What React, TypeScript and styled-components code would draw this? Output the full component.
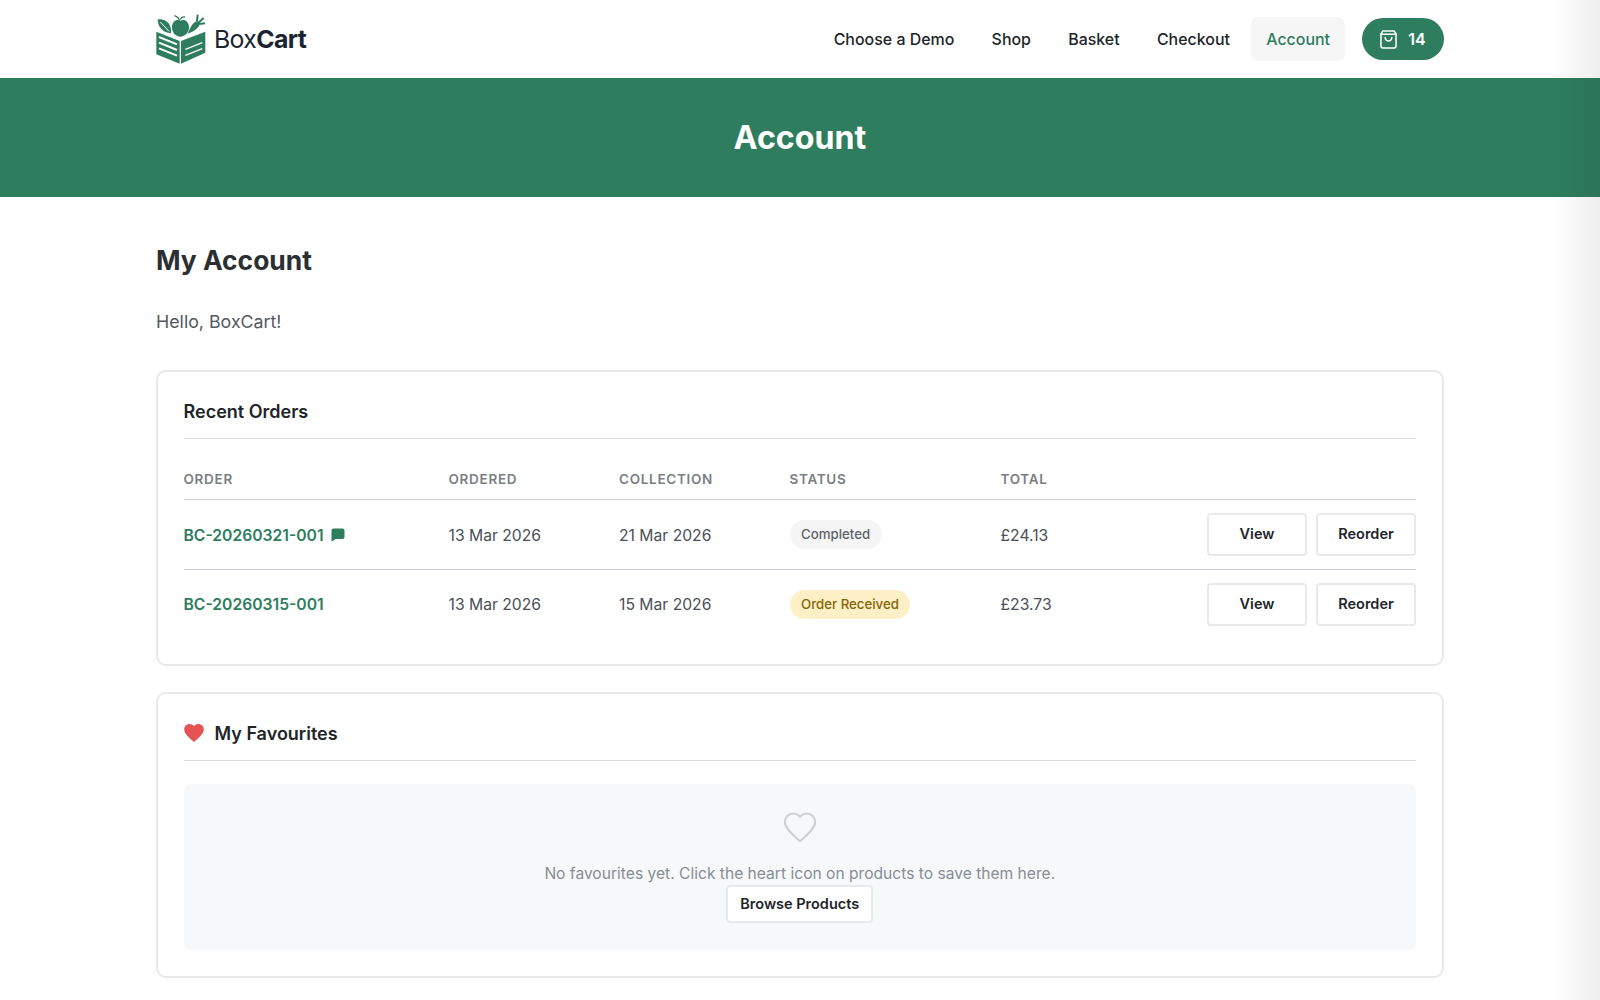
import React from "react";
import styled, { createGlobalStyle } from "styled-components";

const Global = createGlobalStyle`
  * { box-sizing: border-box; }
  html, body { margin: 0; padding: 0; background: #fff; }
  body { font-family: Inter, "Liberation Sans", sans-serif; color: #212529; overflow: hidden; -webkit-font-smoothing: antialiased; }
`;
const Page = styled.div`position: relative; width: 1600px; height: 1000px; overflow: hidden;`;
const Fade = styled.div`
  position: absolute; top: 0; right: 0; width: 48px; height: 100%;
  background: linear-gradient(to right, rgba(0,0,0,0), rgba(0,0,0,.07));
  pointer-events: none;
`;
const Header = styled.header`height: 78px; padding: 0 156px; display: flex; align-items: center; justify-content: space-between;`;
const Brand = styled.div`display: flex; align-items: center; gap: 8px; font-size: 24.8px; letter-spacing: -0.6px; color: #1a2433; font-weight: 400;`;
const BrandBold = styled.b`font-weight: 700;`;
const Nav = styled.nav`display: flex; align-items: center; font-size: 15.95px; font-weight: 500; color: #212529;`;
const NavLink = styled.a<{ $active?: boolean }>`
  padding: 0 ${p => (p.$active ? "15px" : "16px")}; height: 44px; display: flex; align-items: center; border-radius: 8px; margin-right: ${p => (p.$active ? "17px" : "5.25px")};
  ${p => p.$active && "background:#f6f6f6;color:#2e7d5e;"}
`;
const CartPill = styled.div`width: 82px; height: 42px; border-radius: 21px; background: #2e7d5e; color: #fff; display: flex; align-items: center; justify-content: center; gap: 11px; font-weight: 600; font-size: 16px;`;
const Banner = styled.div`height: 119px; background: #2e7d5e; color: #fff; display: flex; align-items: center; justify-content: center;`;
const BannerTitle = styled.h1`margin: 0; font-size: 32.2px; font-weight: 700;`;
const Main = styled.main`padding: 45px 156px 0;`;
const Title = styled.h2`margin: 0; font-size: 26.4px; line-height: 36px; font-weight: 700; color: #2b2f33;`;
const Hello = styled.p`margin: 30px 0 0; font-size: 17.8px; line-height: 28px; color: #54595f;`;
const Card = styled.section`border: 2px solid #e8e9eb; border-radius: 10px; padding: 26px 26px 0 25.5px; background: #fff;`;
const OrdersCard = styled(Card)`margin-top: 34px; height: 296px;`;
const FavCard = styled(Card)`margin-top: 26px; height: 286px;`;
const CardTitle = styled.h3`margin: 0; height: 41px; padding-bottom: 14px; display: flex; align-items: center; gap: 11px; font-size: 18px; font-weight: 600; color: #212529; border-bottom: 1px solid #dcdee0;`;
const Row = styled.div<{ $head?: boolean; $last?: boolean }>`
  display: grid; grid-template-columns: 265px 170.5px 170.5px 211px 1fr auto; align-items: center;
  height: ${p => (p.$head ? "61px" : "69.5px")};
  ${p => p.$head && "padding-top: 19px; font-size: 13.5px; font-weight: 600; letter-spacing: .7px; color: #7a7f85;"}
  ${p => !p.$head && "font-size: 15.7px; color: #495057;"}
  ${p => !p.$last && "border-bottom: 1px solid #c9cbd0;"}
`;
const OrderLink = styled.a<{ $nudge?: boolean }>`
  display: flex; align-items: center; gap: 7px; color: #2e7d5e; font-weight: 600;
  ${p => p.$nudge && "padding-top: 2px;"}
`;
const Cell = styled.span<{ $nudge?: boolean }>`
  ${p => p.$nudge && "padding-top: 2px;"}
`;
const Badge = styled.span<{ $warn?: boolean }>`
  display: inline-block; padding: 0 11.5px; height: 29px; line-height: 29px; border-radius: 15px; font-size: 13.25px; font-weight: 500;
  background: ${p => (p.$warn ? "#fdf0c7" : "#f5f5f6")}; color: ${p => (p.$warn ? "#856404" : "#5c636a")};
`;
const Actions = styled.div`display: flex; gap: 9px;`;
const Btn = styled.button`
  width: 100px; height: 43px; background: #fff; border: 2px solid #e8e9eb; border-radius: 4px;
  font: 600 14.5px Inter, sans-serif; color: #212529; padding: 0 0 2px;
`;
const Empty = styled.div`margin-top: 23px; height: 166px; background: #f7f8fa; border-radius: 8px; display: flex; flex-direction: column; align-items: center; padding-top: 28px; color: #868e96; font-size: 15.6px;`;
const EmptyText = styled.div`margin-top: 19px; line-height: 24px;`;
const BrowseBtn = styled(Btn)`width: 147px; height: 38px; margin-top: -1px;`;

const Logo = () => (
  <svg width="50" height="50" viewBox="47 44 150 150">
    <path d="M48 97 L118 125 L118 193 L48 165 Z" fill="#2e7d5e" />
    <path d="M122 125 L195 97 L195 160 L122 193 Z" fill="#2e7d5e" />
    <path d="M56 113 L110 135 M56 130 L110 152 M56 147 L110 169" stroke="#fff" strokeWidth="6" />
    <path d="M135 150 L186 130 M135 168 L186 148" stroke="#fff" strokeWidth="4.5" />
    <path d="M52 60 C75 56 95 72 92 102 C68 100 52 84 52 60 Z" fill="#2e7d5e" />
    <path d="M60 68 L86 96" stroke="#fff" strokeWidth="3" />
    <path d="M120 64 C132 58 146 66 146 84 C146 100 134 112 120 112 C106 112 95 100 95 84 C95 66 108 58 120 64 Z" fill="#2e7d5e" />
    <path d="M118 64 C116 56 110 52 102 49 M120 60 C124 52 130 52 134 53" stroke="#2e7d5e" strokeWidth="4" fill="none" />
    <path d="M142 103 C150 84 158 70 168 66 C176 66 180 74 176 80 C170 90 156 98 142 103 Z" fill="#2e7d5e" />
    <path d="M170 66 L172 46 M174 70 L190 56 M176 74 L194 72" stroke="#2e7d5e" strokeWidth="6" />
  </svg>
);
const BagIcon = () => (
  <svg width="17" height="19" viewBox="0 0 18 20" fill="none" stroke="#fff" strokeWidth="1.6" strokeLinecap="round" strokeLinejoin="round">
    <path d="M3 1h12l2 3v13a2 2 0 0 1-2 2H3a2 2 0 0 1-2-2V4z" />
    <path d="M1 4.5h16" />
    <path d="M5.5 8a3.5 3.5 0 0 0 7 0" />
  </svg>
);
const Note = () => (
  <svg width="14" height="14" viewBox="0 0 14 14"><path d="M2.5 .5h9a2 2 0 0 1 2 2v6.5a2 2 0 0 1-2 2H4.5L1 13.5a.4.4 0 0 1-.5-.4V2.500a2 2 0 0 1 2-2z" fill="#2e7d5e" /></svg>
);
const HEART = "M12 21.35l-1.45-1.32C5.4 15.36 2 12.28 2 8.5 2 5.42 4.42 3 7.5 3c1.74 0 3.41.81 4.5 2.09C13.09 3.81 14.76 3 16.5 3 19.58 3 22 5.42 22 8.5c0 3.78-3.4 6.86-8.55 11.54L12 21.35z";
const Heart = ({ outline }: { outline?: boolean }) => (
  outline ? (
    <svg width="34" height="31" viewBox="1 2 22 20.5">
      <path d={HEART} fill="none" stroke="#cfd0d2" strokeWidth="1.4" strokeLinejoin="round" />
    </svg>
  ) : (
    <svg width="20" height="18" viewBox="2 3 20 18.4"><path d={HEART} fill="#e55353" /></svg>
  )
);

export default function App() {
  return (
    <Page>
      <Global />
      <Header>
        <Brand><Logo /><span>Box<BrandBold>Cart</BrandBold></span></Brand>
        <Nav>
          <NavLink>Choose a Demo</NavLink>
          <NavLink>Shop</NavLink>
          <NavLink>Basket</NavLink>
          <NavLink>Checkout</NavLink>
          <NavLink $active>Account</NavLink>
          <CartPill><BagIcon />14</CartPill>
        </Nav>
      </Header>
      <Banner><BannerTitle>Account</BannerTitle></Banner>
      <Main>
        <Title>My Account</Title>
        <Hello>Hello, BoxCart!</Hello>
        <OrdersCard>
          <CardTitle>Recent Orders</CardTitle>
          <Row $head><span>ORDER</span><span>ORDERED</span><span>COLLECTION</span><span>STATUS</span><span>TOTAL</span><span /></Row>
          <Row>
            <OrderLink $nudge>BC-20260321-001 <Note /></OrderLink>
            <Cell $nudge>13 Mar 2026</Cell><Cell $nudge>21 Mar 2026</Cell>
            <span><Badge>Completed</Badge></span><Cell $nudge>£24.13</Cell>
            <Actions><Btn>View</Btn><Btn>Reorder</Btn></Actions>
          </Row>
          <Row $last>
            <OrderLink>BC-20260315-001</OrderLink>
            <span>13 Mar 2026</span><span>15 Mar 2026</span>
            <span><Badge $warn>Order Received</Badge></span><span>£23.73</span>
            <Actions><Btn>View</Btn><Btn>Reorder</Btn></Actions>
          </Row>
        </OrdersCard>
        <FavCard>
          <CardTitle><Heart />My Favourites</CardTitle>
          <Empty>
            <Heart outline />
            <EmptyText>No favourites yet. Click the heart icon on products to save them here.</EmptyText>
            <BrowseBtn>Browse Products</BrowseBtn>
          </Empty>
        </FavCard>
      </Main>
      <Fade />
    </Page>
  );
}
